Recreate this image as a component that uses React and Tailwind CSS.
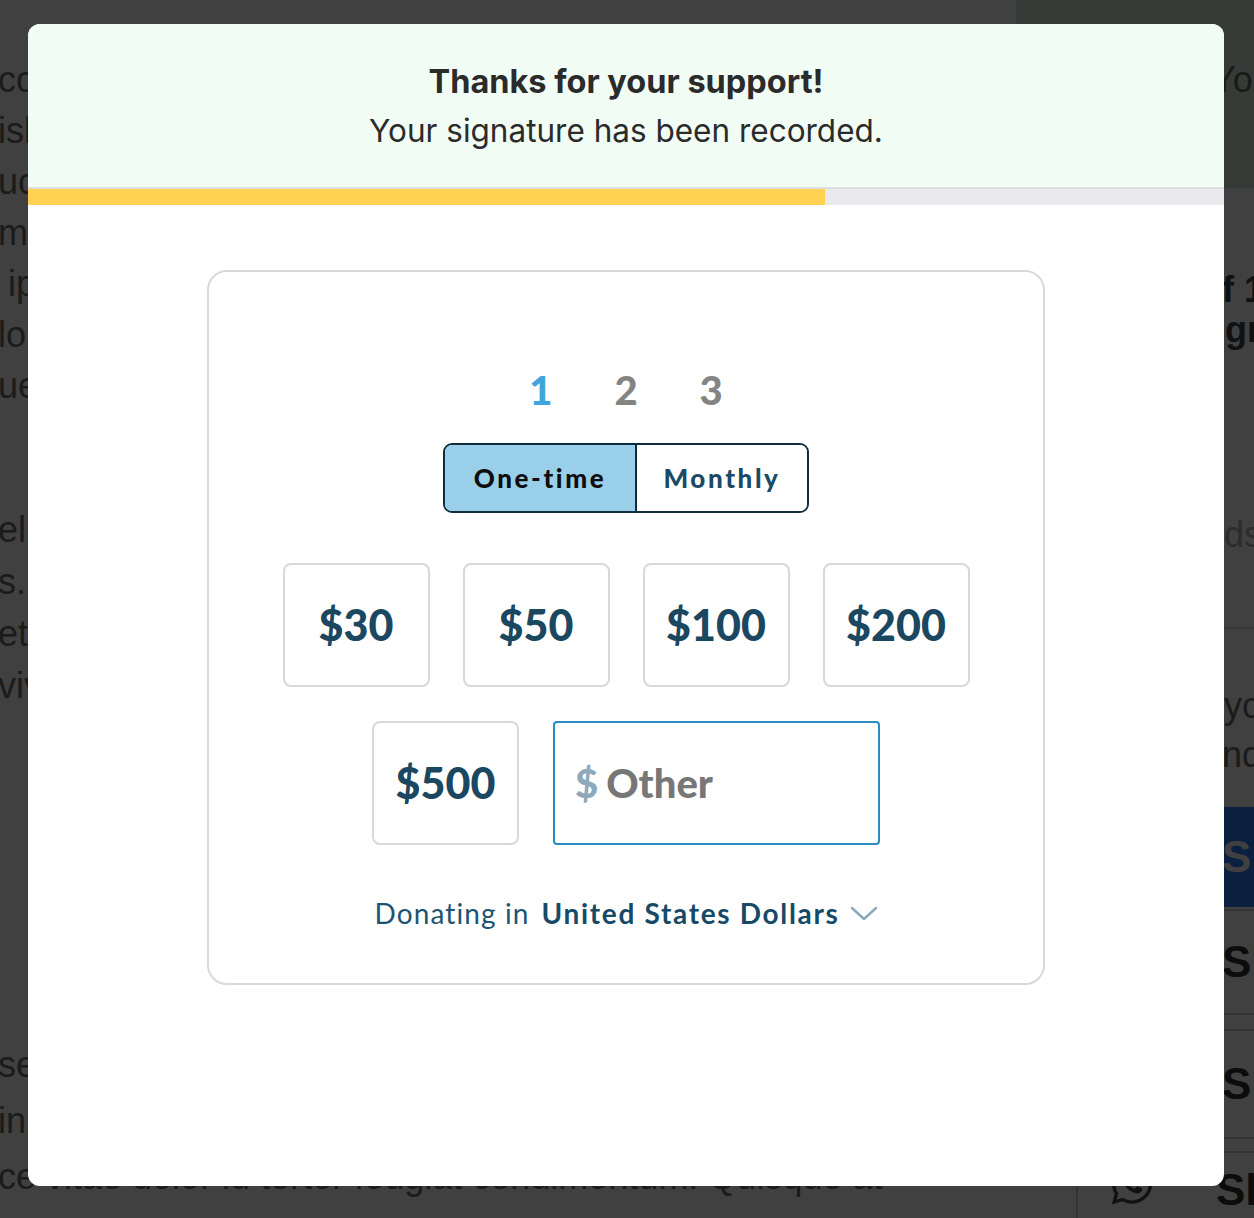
import { FaWhatsapp } from "react-icons/fa";

const p1 = [
  "consectetur adipiscing elit. Nulla facilisi morbi tempus.",
  "isl nunc mi ipsum faucibus vitae aliquet nec.",
  "uctus accumsan tortor posuere ac ut consequat.",
  "mattis aliquam faucibus purus in massa tempor.",
  " ipsum dolor sit amet consectetur adipiscing.",
  "lorem sed risus ultricies tristique nulla.",
  "ue eget nunc lobortis mattis aliquam faucibus.",
];
const p2 = [
  "el pharetra vel turpis nunc eget lorem dolor.",
  "s. Viverra accumsan in nisl nisi scelerisque.",
  "et magna fringilla urna porttitor rhoncus.",
  "viverra maecenas accumsan lacus vel facilisis.",
];
const p3 = [
  "sed risus pretium quam vulputate dignissim.",
  "in fermentum et sollicitudin ac orci phasellus.",
  "ce vitae dolor id tortor feugiat condimentum. Quisque at",
];

function Amount({ label }) {
  return (
    <button className="flex h-[124px] w-[147px] items-center justify-center rounded-[8px] border-2 border-[#d8d8d8] bg-white text-[43px] font-black text-[#1b4760]">
      {label}
    </button>
  );
}

export default function App() {
  return (
    <div className="relative h-[1218px] w-full overflow-hidden bg-white">
      {/* background page */}
      <div className="flex h-full font-['Liberation_Sans',Arial,sans-serif]">
        <main className="min-w-0 flex-1 overflow-hidden">
          <div className="-ml-[2px] whitespace-pre text-[36px] text-[#6e6e6e]">
            <div className="pt-[54px] leading-[51px]">
              {p1.map((l) => (
                <div key={l}>{l}</div>
              ))}
            </div>
            <div className="mt-[93px] leading-[52px]">
              {p2.map((l) => (
                <div key={l}>{l}</div>
              ))}
            </div>
            <div className="mt-[325px] leading-[56px]">
              {p3.map((l) => (
                <div key={l}>{l}</div>
              ))}
            </div>
          </div>
        </main>
        <aside className="flex w-[238px] shrink-0 flex-col overflow-hidden whitespace-pre text-[36px]">
          <div className="h-[188px] shrink-0 bg-[#dcecdc] pl-[196px] pt-[55px] leading-[50px] text-[#6a6a6a]">
            Your petition
          </div>
          <div className="pt-[82px] font-bold leading-[40px] text-[#444]">
            <div className="pl-[184px]">of 1,000</div>
            <div className="pl-[151px]">progress</div>
          </div>
          <div className="pl-[150px] pt-[165px] leading-[40px] text-[#b0b0b0]">words</div>
          <div className="mt-[72px] border-t-2 border-[#e0e0e0]" />
          <div className="pt-[52px] leading-[49px] text-[#6e6e6e]">
            <div className="pl-[208px]">your</div>
            <div className="pl-[186px]">and</div>
          </div>
          <div className="ml-[60px] mt-[28px] flex h-[100px] w-[240px] shrink-0 items-center bg-[#2c7cfa] pl-[146px] text-[44px] font-bold text-white">
            Share
          </div>
          <div className="ml-[60px] mt-[2px] flex h-[106px] w-[240px] shrink-0 items-center border-2 border-[#d0d0d0] pl-[144px] text-[44px] font-bold text-[#333]">
            Share
          </div>
          <div className="ml-[60px] mt-[14px] flex h-[110px] w-[240px] shrink-0 items-center border-2 border-[#d0d0d0] pl-[144px] text-[44px] font-bold text-[#333]">
            Share
          </div>
          <div className="ml-[60px] mt-[12px] flex h-[110px] w-[240px] shrink-0 items-start border-2 border-[#d0d0d0] pt-[4px] text-[44px] font-bold text-[#333]">
            <FaWhatsapp className="ml-[31px] mr-[61px] mt-[4px] h-[46px] w-[46px] shrink-0 text-[#444]" />
            Share
          </div>
        </aside>
      </div>

      {/* overlay + modal */}
      <div className="absolute inset-0 bg-black/75 pl-[28px] pr-[30px] pt-[24px]">
        <div className="flex h-[1162px] flex-col overflow-hidden rounded-[12px] bg-white">
          <div className="flex h-[165px] shrink-0 flex-col items-center justify-center border-b-2 border-[#dedede] bg-[#f1fdf4] font-['Inter',sans-serif] leading-[49px] text-[#2b2b2b]">
            <div className="text-[32.5px] font-bold">Thanks for your support!</div>
            <div className="text-[31.5px]">Your signature has been recorded.</div>
          </div>
          <div className="h-[16px] shrink-0 bg-[#e9e9ee]">
            <div className="h-full w-2/3 bg-[#ffd254]" />
          </div>
          <div className="flex-1 pt-[65px] font-['Lato',sans-serif]">
            <div className="mx-auto flex h-[715px] w-[838px] flex-col items-center rounded-[20px] border-2 border-[#d9d9d9] pt-[96px]">
              <div className="flex h-[44px] items-center gap-[62px] text-[40px] font-black leading-[44px]">
                <span className="text-[#3ea6dc]">1</span>
                <span className="text-[#848484]">2</span>
                <span className="text-[#848484]">3</span>
              </div>
              <div className="mt-[31px] flex h-[70px] overflow-hidden rounded-[9px] border-2 border-[#0f2d3c] text-[26px] font-black tracking-[0.1em]">
                <div className="flex w-[190px] items-center justify-center bg-[#9acfe9] text-[#0d0d0d]">
                  One-time
                </div>
                <div className="flex w-[172px] items-center justify-center border-l-2 border-[#0f2d3c] bg-white text-[#1a4a66]">
                  Monthly
                </div>
              </div>
              <div className="mt-[50px] flex gap-[33px]">
                <Amount label="$30" />
                <Amount label="$50" />
                <Amount label="$100" />
                <Amount label="$200" />
              </div>
              <div className="mt-[34px] flex gap-[34px]">
                <Amount label="$500" />
                <div className="flex h-[124px] w-[327px] items-center rounded-[4px] border-2 border-[#2a8cc3] pl-[20px] text-[40px] font-black">
                  <span className="text-[#8ea9bb]">$</span>
                  <span className="ml-[8px] text-[#777777]">Other</span>
                </div>
              </div>
              <div className="mt-[50px] flex h-[36px] items-center text-[28px] leading-[36px] text-[#1c5472]">
                <span className="tracking-[0.04em]">Donating in</span>
                <span className="ml-[12px] font-bold tracking-[0.06em] text-[#164a66]">United States Dollars</span>
                <svg className="ml-[10px] mt-[2px]" width="28" height="16" viewBox="0 0 28 16" fill="none">
                  <polyline points="2,2 14,13 26,2" stroke="#8ea9bb" strokeWidth="2.5" strokeLinecap="round" strokeLinejoin="round" />
                </svg>
              </div>
            </div>
          </div>
        </div>
      </div>
    </div>
  );
}
